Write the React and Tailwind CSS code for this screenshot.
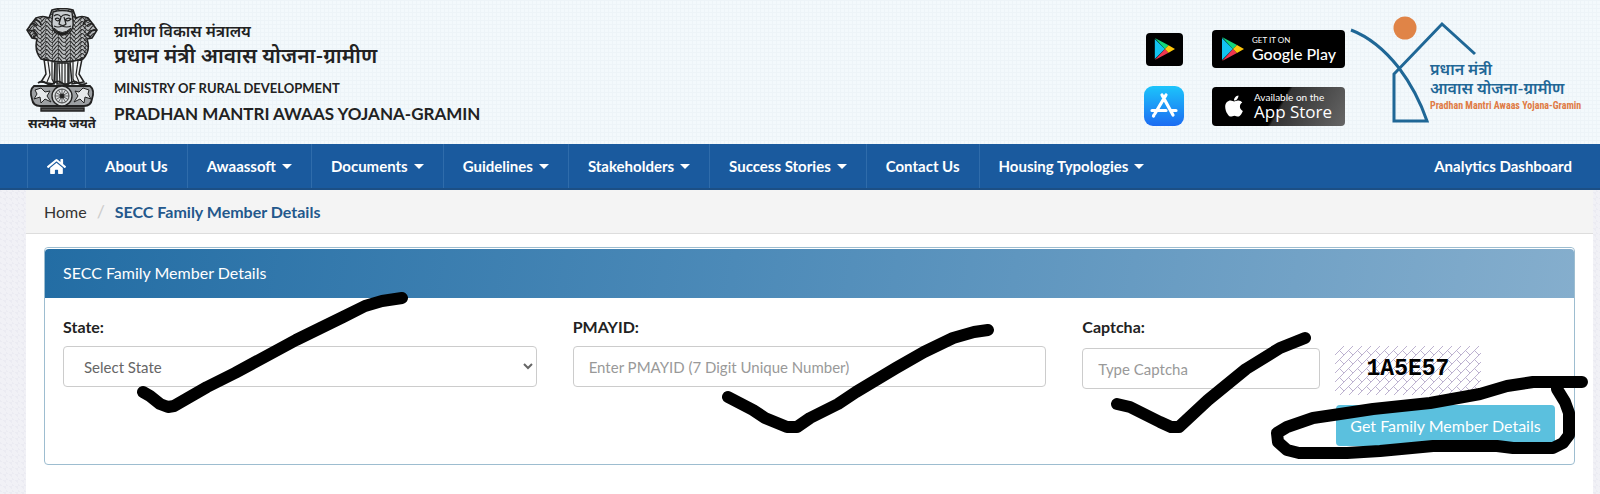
import { FaApple, FaHome } from "react-icons/fa";

const menu = [
  { label: "About Us" },
  { label: "Awaassoft", caret: true },
  { label: "Documents", caret: true },
  { label: "Guidelines", caret: true },
  { label: "Stakeholders", caret: true },
  { label: "Success Stories", caret: true },
  { label: "Contact Us" },
  { label: "Housing Typologies", caret: true },
];

const maneRows = Array.from({ length: 13 }, (_, i) => 4 + i * 4);

function Emblem() {
  return (
    <svg viewBox="0 0 72 104" className="w-[72px] h-[104px]" fill="none" stroke="#222" role="img" aria-label="State Emblem of India">
      <defs>
        <clipPath id="lions">
          <path d="M26 2Q36-1 47 2L50 10Q56 7 62 10L66 15L71 22L66 30L61 31Q65 43 57 51Q36 57 15 51Q8 43 11 31L6 30L1 22L6 15L10 10Q17 7 23 10Z" />
        </clipPath>
      </defs>
      <path
        d="M26 2Q36-1 47 2L50 10Q56 7 62 10L66 15L71 22L66 30L61 31Q65 43 57 51Q36 57 15 51Q8 43 11 31L6 30L1 22L6 15L10 10Q17 7 23 10Z"
        fill="#b9bcbe"
        strokeWidth="1.6"
      />
      <g clipPath="url(#lions)" strokeWidth="1.1">
        {maneRows.map((y) => (
          <path key={y} d={`M-1 ${y}q3 5 6 0t6 0t6 0t6 0t6 0t6 0t6 0t6 0t6 0t6 0t6 0t6 0`} />
        ))}
        {maneRows.map((y) => (
          <path key={y} strokeWidth="0.8" d={`M2 ${y + 2}l3 3m4-4l-2 4m7-3l2 3m5-4l-2 4m8-3l-1 3m7-4l-1 4m7-3l2 3m4-4l-1 4m7-3l-3 3m8-4l-2 4m6-3l-2 3`} />
        ))}
      </g>
      {/* middle face */}
      <path d="M27 4Q36 1 46 4L47 13Q48 21 43 25Q36 29 30 25Q25 20 26 13Z" fill="#c9cccf" strokeWidth="1.4" />
      <path d="M28 8q4-3 7 1q3-4 9-1M29 11q3-2 5 1q-3 2-5-1M39 12q3-3 6-1q-3 3-6 1M35 9l-2 7q4 3 7 0l-2-7M28 18q4 2 8 0q5 2 9 0" strokeWidth="1.2" />
      <path d="M28 20Q36 29 45 20Q43 26 36 27Q30 26 28 20Z" fill="#1b1b1b" />
      {/* side faces */}
      <path d="M4 17q4-3 7 1M2 22l6 1l3 4l-4 2M9 12q5 0 6 5M68 17q-4-3-7 1M70 22l-6 1l-3 4l4 2M63 12q-5 0-6 5" strokeWidth="1.6" />
      {/* legs */}
      <path d="M18 51L20 66L15 74L28 76L29 54ZM31 55L31 76H42L42 55ZM44 54L46 76L58 74L53 66L56 51Z" fill="#f2f4f5" strokeWidth="1.5" />
      <path d="M22 53l2 14l-3 7M26 54v17l2 4M33 55l1 20M36 55v20M39 55v20M47 54v17l2 4M52 53l-2 14l3 7M29 55v20M43 55v20" strokeWidth="1.2" />
      <path d="M12 75q4-3 8 0t8 0t8 0t8 0t8 0t9 0" strokeWidth="1.8" />
      {/* abacus */}
      <path d="M8 78H64Q69 82 66 91Q65 98 58 98H14Q7 98 6 91Q3 82 8 78Z" fill="#9da0a3" strokeWidth="1.8" />
      <path d="M9 82l6-2l4 4l5-1l-3 5l4 6l-6-3l-4 4l-1-6l-6 2l3-5ZM63 82l-6-2l-4 4l-4-1l3 5l-4 6l6-3l4 4l1-6l6 2l-3-5Z" fill="#e6e8ea" strokeWidth="1" />
      <circle cx="36" cy="88" r="10" fill="#d9dcde" strokeWidth="1.4" />
      <circle cx="36" cy="88" r="7" strokeWidth="0.8" />
      {[0, 30, 60, 90, 120, 150].map((deg) => (
        <path key={deg} d="M29 88H43" strokeWidth="0.6" transform={`rotate(${deg} 36 88)`} />
      ))}
      <circle cx="36" cy="88" r="2" fill="#222" />
      <path d="M15 100H58V103H15Z" fill="#555" strokeWidth="1.4" />
    </svg>
  );
}

function PlayLogo({ className }) {
  return (
    <svg viewBox="0 0 24 24" className={className} aria-hidden="true">
      <path d="M2 1L2 23L13 12Z" fill="#12c3f0" />
      <path d="M2 0L13 12L17 8Z" fill="#12d67b" />
      <path d="M2 24L13 12L17 16Z" fill="#ee3650" />
      <path d="M17 8L13 12L17 16L24 12Z" fill="#fec70b" />
    </svg>
  );
}

function AppStoreLogo() {
  return (
    <svg viewBox="0 0 40 40" className="w-10 h-10">
      <defs>
        <linearGradient id="store" x1="0" y1="0" x2="0" y2="1">
          <stop offset="0" stopColor="#1cc4fb" />
          <stop offset="1" stopColor="#1c6cf2" />
        </linearGradient>
      </defs>
      <rect width="40" height="40" rx="9" fill="url(#store)" />
      <path d="M22 9L11 27.500M18 9L29 29M8 24.500H22M27 24.500H32M9.500 30L10 29" stroke="#fff" strokeWidth="3.200" strokeLinecap="round" />
    </svg>
  );
}

function StoreLinks() {
  return (
    <div className="grid grid-cols-[40px_133px] gap-x-7 gap-y-[18px] items-center justify-items-center">
      <a href="#play" aria-label="Google Play" className="flex items-center justify-center w-[37px] h-[33px] rounded bg-black">
        <PlayLogo className="w-[22px] h-[22px]" />
      </a>
      <a href="#google-play" className="flex items-center gap-2 w-full h-[38px] pl-2 rounded bg-black text-white">
        <PlayLogo className="w-6 h-6" />
        <span className="flex flex-col whitespace-nowrap">
          <span className="text-[8px] leading-[9px]">GET IT ON</span>
          <span className="text-[16px] leading-[18px] font-medium font-['Lato',sans-serif]">Google Play</span>
        </span>
      </a>
      <a href="#ios" aria-label="App Store">
        <AppStoreLogo />
      </a>
      <a href="#app-store" className="flex items-center gap-2 w-full h-[39px] pl-2.5 rounded bg-linear-[120deg,#000_50%,#333_52%,#666] text-white">
        <FaApple className="w-6 h-6" />
        <span className="flex flex-col whitespace-nowrap">
          <span className="text-[10px] leading-[11px]">Available on the</span>
          <span className="text-[17px] leading-[18px] font-medium font-['Open_Sans',sans-serif]">App Store</span>
        </span>
      </a>
    </div>
  );
}

function SchemeLogo() {
  return (
    <div className="relative w-[226px] h-[112px] pt-[46px] pl-[81px] whitespace-nowrap">
      <svg viewBox="0 0 226 112" className="absolute left-0 top-0 w-[226px] h-[112px]" fill="none" stroke="#1f6796" strokeWidth="3" aria-hidden="true">
        <circle cx="56" cy="14" r="11.500" fill="#e08447" stroke="none" />
        <path d="M2 16Q28 26 50 54Q68 78 78 107H45V60L93 10L126 40" />
      </svg>
      <p className="text-[16px] leading-[18px] text-[#1f6796] font-semibold">प्रधान मंत्री</p>
      <p className="text-[16px] leading-[19px] text-[#1f6796] font-semibold">आवास योजना-ग्रामीण</p>
      <p className="text-[10px] leading-[18px] text-[#e07b45] font-bold font-['Liberation_Sans_Narrow','Roboto_Condensed','Liberation_Sans',sans-serif]">
        Pradhan Mantri Awaas Yojana-Gramin
      </p>
    </div>
  );
}

function Header() {
  return (
    <header className="flex justify-between h-36 pl-[26px] pr-[25px] bg-[#f3f9fc] bg-[linear-gradient(#edf4f8_1px,transparent_1px),linear-gradient(90deg,#edf4f8_1px,transparent_1px)] bg-[size:4px_4px]">
      <div className="flex gap-4 pt-2">
        <div className="flex flex-col items-center">
          <Emblem />
          <span className="text-[13px] leading-[22px] font-bold text-[#222] whitespace-nowrap">सत्यमेव जयते</span>
        </div>
        <div className="pt-[11px] text-[#222] font-bold whitespace-nowrap">
          <p className="text-[16px] leading-[24px] font-semibold">ग्रामीण विकास मंत्रालय</p>
          <p className="text-[21px] leading-[24px] font-semibold">प्रधान मंत्री आवास योजना-ग्रामीण</p>
          <p className="pt-[9px] text-[13px] leading-[24px]">MINISTRY OF RURAL DEVELOPMENT</p>
          <p className="text-[17px] leading-[28px]">PRADHAN MANTRI AWAAS YOJANA-GRAMIN</p>
        </div>
      </div>
      <div className="flex gap-1 pt-[14px]">
        <div className="pt-4">
          <StoreLinks />
        </div>
        <SchemeLogo />
      </div>
    </header>
  );
}

function Navbar() {
  return (
    <nav className="flex items-center justify-between h-[46px] pl-[27px] pr-7 bg-[#1a5a9e] border-b-2 border-[#1c4f85] text-white text-[15px] font-bold whitespace-nowrap">
      <div className="flex h-full">
        <a href="#home" aria-label="Home" className="flex items-center px-[19px] border-l border-[#2f6cab]">
          <FaHome className="w-[19px] h-[19px]" />
        </a>
        {menu.map((item) => (
          <a key={item.label} href="#menu" className="flex items-center gap-1.5 px-[19px] border-l border-[#2f6cab]">
            {item.label}
            {item.caret && (
              <svg viewBox="0 0 10 5" className="w-2.5 h-[5px]" fill="currentColor" aria-hidden="true">
                <path d="M0 0H10L5 5Z" />
              </svg>
            )}
          </a>
        ))}
      </div>
      <a href="#dashboard">Analytics Dashboard</a>
    </nav>
  );
}

function CaptchaImage() {
  return (
    <div className="relative w-[146px] h-[49px] flex items-center justify-center">
      <svg className="absolute inset-0 w-full h-full" aria-hidden="true">
        <defs>
          <pattern id="bricks" width="18" height="18" patternUnits="userSpaceOnUse">
            <path
              d="M0 9L9 0M0 18L18 0M9 18L18 9M4.500 4.500L9 9M13.500 13.500L18 18M4.500 13.500L9 18M13.500 4.500L18 9"
              stroke="#bdb2d0"
              strokeWidth="1"
              fill="none"
            />
          </pattern>
        </defs>
        <rect width="146" height="49" fill="url(#bricks)" />
      </svg>
      <span className="relative pb-1 text-[23px] leading-6 font-bold text-black font-['Liberation_Mono',monospace]">1A5E57</span>
    </div>
  );
}

const field = "w-full h-[41px] rounded border border-[#ccc] bg-white text-[15px]";
const label = "block pb-2 text-[16px] leading-[22px] font-bold text-[#222]";

function SearchPanel() {
  return (
    <section className="rounded border border-[#9dbdd0] bg-white">
      <h2 className="h-[50px] px-[18px] border-t border-white rounded-t bg-linear-[100deg,#236da4,#4c8ab8_45%,#85aecd] text-white text-[16px] leading-[47px]">
        SECC Family Member Details
      </h2>
      <form className="grid grid-cols-3 gap-9 px-[18px] pt-[18px] pb-[18px]" onSubmit={(e) => e.preventDefault()}>
        <div>
          <label htmlFor="state" className={label}>State:</label>
          <select id="state" className={`${field} pl-4 text-[#666]`}>
            <option>Select State</option>
          </select>
        </div>
        <div>
          <label htmlFor="pmayid" className={label}>PMAYID:</label>
          <input id="pmayid" type="text" placeholder="Enter PMAYID (7 Digit Unique Number)" className={`${field} px-[15px] placeholder:text-[#999]`} />
        </div>
        <div>
          <label htmlFor="captcha" className={label}>Captcha:</label>
          <div className="grid grid-cols-[1fr_221px] gap-[15px]">
            <div className="pt-0.5">
              <input id="captcha" type="text" placeholder="Type Captcha" className={`${field} px-[15px] placeholder:text-[#999]`} />
            </div>
            <div className="flex flex-col gap-2.5">
              <CaptchaImage />
              <button type="submit" className="self-center h-[41px] px-[14px] rounded bg-[#5bc0de] text-white text-[16px] whitespace-nowrap">
                Get Family Member Details
              </button>
            </div>
          </div>
        </div>
      </form>
    </section>
  );
}

function PenMarks() {
  return (
    <svg
      viewBox="0 0 1600 494"
      preserveAspectRatio="none"
      className="absolute left-0 top-0 w-full h-[494px] pointer-events-none"
      fill="none"
      stroke="#000"
      strokeWidth="12"
      strokeLinecap="round"
      strokeLinejoin="round"
      aria-hidden="true"
    >
      <path d="M143 392L150 396L160 404L168 407L174 406L207 387L235 373L296 340L343 317L365 306L382 301L402 298" />
      <path d="M728 397L753 410L765 418L787 427H797L810 418L838 404L856 392L896 368L924 352L953 338L974 332L988 330" />
      <path d="M1117 404L1130 407L1160 422L1171 427H1179L1208 400L1246 369L1280 348L1305 338" />
      <path d="M1582 382H1533L1507 386L1480 394L1430 403L1373 409L1340 414L1313 418L1287 427L1277 433L1278 442L1287 450L1299 453H1347L1380 451L1433 446H1497L1513 448H1553L1563 443L1569 435V413L1565 402L1557 389" />
    </svg>
  );
}

export default function App() {
  return (
    <div className="relative min-h-screen font-['Lato','Noto_Sans',sans-serif] bg-[#f1f1f6] bg-[linear-gradient(45deg,#ebebf2_25%,transparent_25%,transparent_75%,#ebebf2_75%)] bg-[size:6px_6px]">
      <Header />
      <Navbar />
      <main className="ml-[26px] mr-[7px] min-h-[304px] bg-white">
        <ol className="flex h-11 items-center gap-2.5 px-[18px] bg-[#f4f4f4] border-b border-[#ddd] text-[16px]">
          <li>
            <a href="#home" className="text-[#333]">Home</a>
          </li>
          <li aria-hidden="true" className="text-[#ccc] text-[18px]">/</li>
          <li className="font-bold text-[#23588c]">SECC Family Member Details</li>
        </ol>
        <div className="pt-[13px] px-[18px]">
          <SearchPanel />
        </div>
      </main>
      <PenMarks />
    </div>
  );
}
